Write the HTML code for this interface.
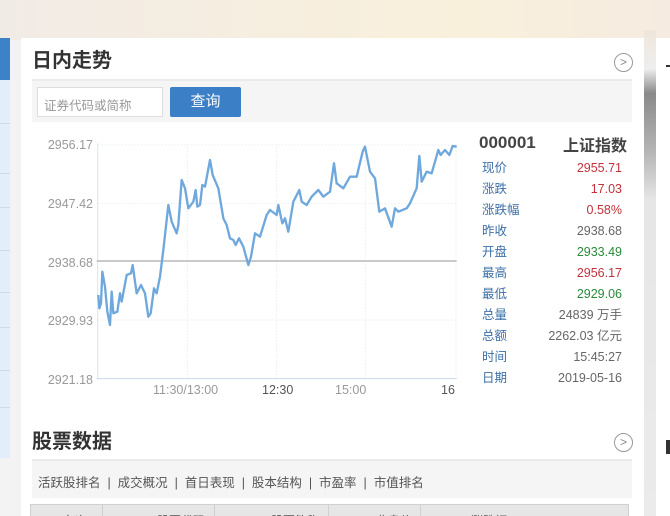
<!DOCTYPE html>
<html><head><meta charset="utf-8"><style>
*{margin:0;padding:0;box-sizing:border-box}
html,body{width:670px;height:516px;overflow:hidden}
body{position:relative;background:#f3f3f3;font-family:"Liberation Sans","Noto Sans CJK SC",sans-serif}
.abs{position:absolute}
.top{left:0;top:0;width:670px;height:40px;background:linear-gradient(90deg,#f1ebe6,#f6eedf 40%,#f9f0dc 70%,#f5ebe0)}
.card{left:21px;top:38px;width:623px;height:478px;background:#fff}
.h{font-size:20px;font-weight:bold;color:#333;line-height:24px}
.circ{width:19px;height:19px;border:1.5px solid #999;border-radius:50%;color:#888;font-size:12px;line-height:16px;text-align:center}
.yl{font-size:12.5px;color:#999;left:38px;width:55px;text-align:right}
.xl{font-size:12.5px;color:#999}
.st{left:482px;width:140px;font-size:12.5px;height:21px;line-height:21px}
.st span{position:absolute;left:0;top:0;line-height:21px;color:#3d6fa6}
.st b{position:absolute;right:0;top:0;line-height:21px;font-weight:normal;color:#666}
.r b{color:#c3323c!important}.g b{color:#2a8a3a!important}
</style></head><body>
<div class="abs top"></div>
<div class="abs" style="left:0;top:38px;width:10px;height:420px;background:#e2eefa"></div>
<div class="abs" style="left:0;top:38px;width:10px;height:42px;background:#3b82c8"></div>
<div class="abs" style="left:0;top:123px;width:10px;height:1px;background:#cfdbe8"></div>
<div class="abs" style="left:0;top:173px;width:10px;height:1px;background:#cfdbe8"></div>
<div class="abs" style="left:0;top:207px;width:10px;height:1px;background:#cfdbe8"></div>
<div class="abs" style="left:0;top:250px;width:10px;height:1px;background:#cfdbe8"></div>
<div class="abs" style="left:0;top:292px;width:10px;height:1px;background:#cfdbe8"></div>
<div class="abs" style="left:0;top:327px;width:10px;height:1px;background:#cfdbe8"></div>
<div class="abs" style="left:0;top:370px;width:10px;height:1px;background:#cfdbe8"></div>
<div class="abs" style="left:0;top:407px;width:10px;height:1px;background:#cfdbe8"></div>
<div class="abs" style="left:644px;top:30px;width:12px;height:486px;background:linear-gradient(#efe6dc 0,#eee 8%,#8a8a8a 13%,#b5b5b5 25%,#e6e6e6 35%,#ebebeb 100%)"></div>
<div class="abs" style="left:656px;top:38px;width:14px;height:478px;background:#fff"></div>
<div class="abs" style="left:666px;top:65px;width:4px;height:2px;background:#333"></div>
<div class="abs" style="left:666px;top:440px;width:4px;height:14px;background:#333"></div>

<div class="abs card"></div>
<div class="abs h" style="left:32px;top:49px">日内走势</div>
<div class="abs circ" style="left:614px;top:53px">&gt;</div>
<div class="abs" style="left:32px;top:79px;width:600px;height:2px;background:#ebebeb"></div>
<div class="abs" style="left:32px;top:81px;width:600px;height:41px;background:#f5f5f5"></div>
<div class="abs" style="left:37px;top:87px;width:126px;height:30px;background:#fff;border:1px solid #ddd;font-size:12.5px;color:#999;padding:7px 0 0 6px">证券代码或简称</div>
<div class="abs" style="left:170px;top:87px;width:71px;height:30px;background:#3b7fc6;border-radius:2px;color:#fff;font-size:15px;text-align:center;line-height:30px">查询</div>

<div class="abs yl" style="top:138px">2956.17</div>
<div class="abs yl" style="top:197px">2947.42</div>
<div class="abs yl" style="top:256px">2938.68</div>
<div class="abs yl" style="top:314px">2929.93</div>
<div class="abs yl" style="top:373px">2921.18</div>
<div class="abs xl" style="left:153px;top:383px">11:30/13:00</div>
<div class="abs xl" style="left:262px;top:383px;color:#555">12:30</div>
<div class="abs xl" style="left:335px;top:383px">15:00</div>
<div class="abs xl" style="left:441px;top:383px;width:15px;overflow:hidden;color:#555;white-space:nowrap">16:00</div>
<svg class="abs" style="left:30px;top:130px" width="440" height="270" viewBox="0 0 1320 810">
<g stroke="#eef1f5" stroke-width="3" stroke-dasharray="6 4" fill="none">
<line x1="203" y1="45" x2="1280" y2="45"/><line x1="203" y1="220" x2="1280" y2="220"/><line x1="203" y1="570" x2="1280" y2="570"/>
<line x1="472" y1="40" x2="472" y2="745"/><line x1="740" y1="40" x2="740" y2="745"/><line x1="1006" y1="40" x2="1006" y2="745"/><line x1="1278" y1="40" x2="1278" y2="745"/>
</g>
<line x1="203" y1="40" x2="203" y2="748" stroke="#dbe5ef" stroke-width="3"/>
<line x1="200" y1="746" x2="1280" y2="746" stroke="#c8d8ea" stroke-width="3"/>
<line x1="200" y1="393" x2="1280" y2="393" stroke="#c9c9c9" stroke-width="6"/>
<polyline fill="none" stroke="#6fa8dc" stroke-width="7" stroke-linejoin="round" points="205,495 208,535 213,520 217,425 225,470 232,545 240,585 245,485 250,550 262,545 270,490 275,515 290,435 303,430 308,405 320,490 333,465 345,490 355,560 362,550 372,475 380,490 390,440 400,360 415,225 425,275 440,310 445,285 455,150 465,175 475,235 490,215 497,180 502,230 510,225 517,165 525,170 540,90 548,135 565,175 580,265 590,285 600,325 610,330 617,345 627,325 640,350 655,405 663,380 675,310 690,320 710,255 720,240 740,255 745,225 757,280 765,265 775,305 790,215 808,180 815,215 830,225 845,200 865,180 880,200 900,185 912,100 920,160 940,175 960,140 980,140 998,65 1005,50 1020,125 1035,145 1048,245 1065,235 1085,290 1095,235 1105,245 1130,235 1140,220 1160,175 1168,78 1175,155 1190,125 1205,130 1225,60 1232,75 1245,60 1258,75 1268,48 1280,50"/>
</svg>

<div class="abs" style="left:479px;top:133px;font-size:17px;font-weight:bold;color:#444">000001</div>
<div class="abs" style="left:563px;top:132px;font-size:16px;font-weight:bold;color:#444">上证指数</div>
<div class="abs st r" style="top:158px"><span>现价</span><b>2955.71</b></div>
<div class="abs st r" style="top:179px"><span>涨跌</span><b>17.03</b></div>
<div class="abs st r" style="top:200px"><span>涨跌幅</span><b>0.58%</b></div>
<div class="abs st" style="top:221px"><span>昨收</span><b>2938.68</b></div>
<div class="abs st g" style="top:242px"><span>开盘</span><b>2933.49</b></div>
<div class="abs st r" style="top:263px"><span>最高</span><b>2956.17</b></div>
<div class="abs st g" style="top:284px"><span>最低</span><b>2929.06</b></div>
<div class="abs st" style="top:305px"><span>总量</span><b>24839 万手</b></div>
<div class="abs st" style="top:326px"><span>总额</span><b>2262.03 亿元</b></div>
<div class="abs st" style="top:347px"><span>时间</span><b>15:45:27</b></div>
<div class="abs st" style="top:368px"><span>日期</span><b>2019-05-16</b></div>

<div class="abs h" style="left:32px;top:430px">股票数据</div>
<div class="abs circ" style="left:614px;top:433px">&gt;</div>
<div class="abs" style="left:32px;top:459px;width:600px;height:2px;background:#ebebeb"></div>
<div class="abs" style="left:32px;top:461px;width:600px;height:37px;background:#f5f5f5;font-size:12.5px;color:#555;padding:11px 0 0 6px;white-space:nowrap">活跃股排名 &nbsp;|&nbsp; 成交概况 &nbsp;|&nbsp; 首日表现 &nbsp;|&nbsp; 股本结构 &nbsp;|&nbsp; 市盈率 &nbsp;|&nbsp; 市值排名</div>
<div class="abs" style="left:30px;top:504px;width:599px;height:12px;background:#e6e6e6;border:1px solid #d0d0d0;border-bottom:none;overflow:hidden">
<div class="abs" style="left:71px;top:0;width:1px;height:12px;background:#d0d0d0"></div>
<div class="abs" style="left:183px;top:0;width:1px;height:12px;background:#d0d0d0"></div>
<div class="abs" style="left:297px;top:0;width:1px;height:12px;background:#d0d0d0"></div>
<div class="abs" style="left:389px;top:0;width:1px;height:12px;background:#d0d0d0"></div>
<div class="abs" style="left:0;top:7px;width:599px;font-size:12px;color:#555;white-space:nowrap">
<span class="abs" style="left:32px">名次</span><span class="abs" style="left:126px">股票代码</span><span class="abs" style="left:240px">股票简称</span><span class="abs" style="left:345px">收盘价</span><span class="abs" style="left:440px">涨跌幅</span></div>
</div>
</body></html>
